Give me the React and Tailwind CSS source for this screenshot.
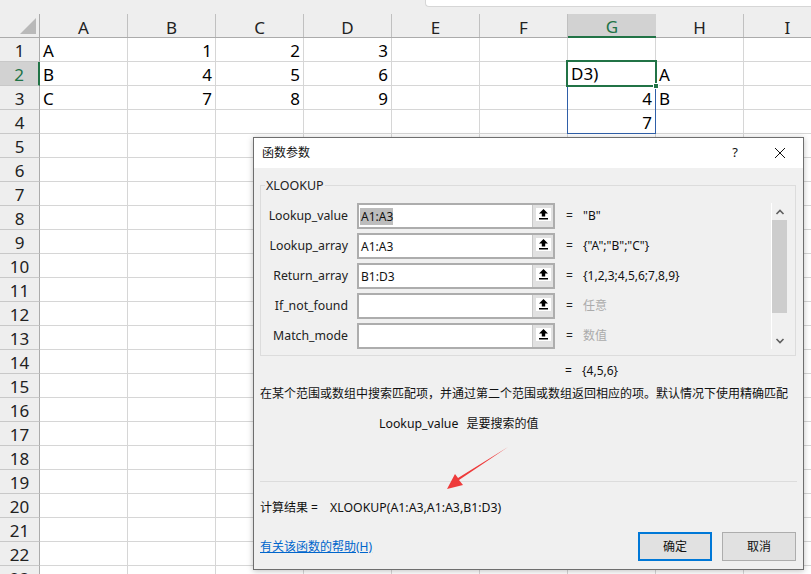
const COLS = ['A', 'B', 'C', 'D', 'E', 'F', 'G', 'H', 'I']
const ROWS = Array.from({ length: 23 }, (_, i) => i + 1)

const CELLS = {
  'A1': 'A', 'B1': 1, 'C1': 2, 'D1': 3,
  'A2': 'B', 'B2': 4, 'C2': 5, 'D2': 6,
  'A3': 'C', 'B3': 7, 'C3': 8, 'D3': 9,
  'G3': 4, 'G4': 7,
  'H2': 'A', 'H3': 'B',
}

const ARGS = [
  { label: 'Lookup_value', value: 'A1:A3', result: '"B"', selected: true },
  { label: 'Lookup_array', value: 'A1:A3', result: '{"A";"B";"C"}' },
  { label: 'Return_array', value: 'B1:D3', result: '{1,2,3;4,5,6;7,8,9}' },
  { label: 'If_not_found', value: '', result: '任意', muted: true },
  { label: 'Match_mode', value: '', result: '数值', muted: true },
]

function Sheet() {
  return (
    <div className="flex flex-col">
      <div className="flex h-[38px] items-end border-b border-[#ababab] bg-[#eeeeee]">
        <div className="relative h-[23px] w-[40px] shrink-0 border-r border-[#ababab]">
          <div className="absolute bottom-[3px] right-[3px] h-0 w-0 border-b-[16px] border-l-[16px] border-b-[#b9b9b9] border-l-transparent" />
        </div>
        {COLS.map(c => (
          <div
            key={c}
            className={
              c === 'G'
                ? '-mb-px flex h-[24px] w-[88px] shrink-0 items-center justify-center border-b-2 border-[#217346] bg-[#d2d2d2] pt-[4px] text-[17px] text-[#217346]'
                : 'flex h-[23px] w-[88px] shrink-0 items-center justify-center border-r border-[#c0c0c0] pt-[4px] text-[17px] text-[#222222]'
            }
          >
            {c}
          </div>
        ))}
      </div>
      {ROWS.map(r => (
        <div key={r} className="flex h-[24px]">
          <div
            className={
              r === 2
                ? 'flex w-[40px] shrink-0 items-center justify-center border-r-2 border-b border-r-[#217346] border-b-[#c8c8c8] bg-[#d2d2d2] pt-[2px] text-[17px] text-[#217346]'
                : 'flex w-[40px] shrink-0 items-center justify-center border-r border-b border-r-[#ababab] border-b-[#c8c8c8] bg-[#eeeeee] pt-[2px] text-[17px] text-[#222222]'
            }
          >
            {r}
          </div>
          {COLS.map(c => {
            const v = CELLS[c + r]
            return (
              <div
                key={c}
                className={
                  typeof v === 'number'
                    ? 'flex w-[88px] shrink-0 items-center justify-end border-r border-b border-[#d6d6d6] bg-white px-[3px] pt-[2px] text-[17px] text-black'
                    : 'flex w-[88px] shrink-0 items-center border-r border-b border-[#d6d6d6] bg-white px-[3px] pt-[2px] text-[17px] text-black'
                }
              >
                {v}
              </div>
            )
          })}
        </div>
      ))}
    </div>
  )
}

function UpArrow() {
  return (
    <svg width="15" height="13" viewBox="0 0 15 13" className="bg-white">
      <path d="M7.5 1 L12 5.5 L9.2 5.5 L9.2 8.5 L5.8 8.5 L5.8 5.5 L3 5.5 Z" fill="#000" />
      <rect x="3" y="10" width="9" height="1.5" fill="#000" />
    </svg>
  )
}

function ArgRow({ arg }) {
  return (
    <div className="flex h-[26px] items-center">
      <div className="w-[87px] shrink-0 text-right text-[12.3px] text-[#222222]">{arg.label}</div>
      <div className="ml-[9px] flex h-[26px] w-[198px] shrink-0 border-2 border-[#adadad]">
        <div className="flex flex-1 items-center bg-white px-[1px] text-[12px] text-[#111111]">
          {arg.value && (
            <span className={arg.selected ? 'bg-[#bdbdbd] pl-[1px] leading-[17px]' : 'pl-[1px] leading-[17px]'}>{arg.value}</span>
          )}
        </div>
        <div className="flex w-[21px] shrink-0 items-center justify-center border-l border-[#c8c8c8] bg-[#e1e1e1] pb-[3px]">
          <UpArrow />
        </div>
      </div>
      <div className="ml-[11px] w-[17px] shrink-0 text-[12px] text-[#222222]">=</div>
      <div className={arg.muted ? 'text-[12px] text-[#ababab]' : 'text-[12px] text-[#111111]'}>{arg.result}</div>
    </div>
  )
}

function Dialog() {
  return (
    <div className="absolute left-[253px] top-[137px] flex h-[433px] w-[551px] flex-col border border-[#6e6e6e] bg-[#f0f0f0] shadow-[0_1px_6px_rgba(0,0,0,0.25)]">
      <div className="flex h-[30px] shrink-0 items-center bg-white pl-[8px] text-[12px] text-[#111111]">
        <span>函数参数</span>
        <span className="ml-auto mr-[36px] text-[13px]">?</span>
        <svg width="12" height="12" viewBox="0 0 12 12" className="mr-[17px]">
          <path d="M1 1 L11 11 M11 1 L1 11" stroke="#111" strokeWidth="1" />
        </svg>
      </div>
      <div className="relative ml-[6px] mr-[7px] mt-[17px] h-[171px] shrink-0 border border-[#dcdcdc]">
        <div className="absolute -top-[8px] left-[4px] bg-[#f0f0f0] px-[1px] text-[12.5px] leading-[16px] text-[#222222]">XLOOKUP</div>
        <div className="flex flex-col gap-[4px] pt-[17px]">
          {ARGS.map(a => <ArgRow key={a.label} arg={a} />)}
        </div>
        <div className="absolute bottom-[6px] right-[8px] top-[17px] flex w-[16px] flex-col items-center border-l border-white">
          <svg width="10" height="8" viewBox="0 0 10 8" className="mt-[5px]">
            <path d="M1.5 6 L5 2.5 L8.5 6" fill="none" stroke="#606060" strokeWidth="1.6" />
          </svg>
          <div className="mt-[4px] h-[93px] w-full bg-[#cdcdcd]" />
          <svg width="10" height="8" viewBox="0 0 10 8" className="mb-[4px] mt-auto">
            <path d="M1.5 2 L5 5.5 L8.5 2" fill="none" stroke="#606060" strokeWidth="1.6" />
          </svg>
        </div>
      </div>
      <div className="flex h-[29px] shrink-0 items-center pl-[311px] text-[12px] text-[#111111]">
        <span className="w-[17px]">=</span>
        <span>{'{4,5,6}'}</span>
      </div>
      <div className="whitespace-nowrap px-[6px] text-[12px] leading-[18px] text-[#111111]">
        在某个范围或数组中搜索匹配项，并通过第二个范围或数组返回相应的项。默认情况下使用精确匹配
      </div>
      <div className="mt-[12px] flex pl-[125px] text-[12px] leading-[18px] text-[#111111]">
        <span className="text-[12.3px]">Lookup_value</span>
        <span className="ml-[8px]">是要搜索的值</span>
      </div>
      <div className="mx-[6px] mt-[48px] border-t border-[#dcdcdc]" />
      <div className="mt-[17px] flex px-[6px] text-[12px] leading-[18px] text-[#111111]">
        <span className="whitespace-pre">计算结果 = </span>
        <span className="ml-[9px] text-[12.3px]">XLOOKUP(A1:A3,A1:A3,B1:D3)</span>
      </div>
      <div className="mt-[15px] flex items-center pl-[6px] pr-[7px]">
        <a className="text-[12px] text-[#0066cc] underline">有关该函数的帮助(H)</a>
        <button className="ml-auto h-[29px] w-[74px] border-2 border-[#0078d7] bg-[#e1e1e1] text-[12px] text-[#111111]">确定</button>
        <button className="ml-[10px] h-[29px] w-[74px] border border-[#adadad] bg-[#e1e1e1] text-[12px] text-[#111111]">取消</button>
      </div>
    </div>
  )
}

export default function App() {
  return (
    <div className="relative h-[574px] w-[811px] overflow-hidden bg-[#eeeeee] font-['Noto_Sans','Noto_Sans_CJK_SC',sans-serif]">
      <div className="absolute right-0 top-0 h-[7px] w-[386px] rounded-bl-[4px] border-b border-l border-[#d6d6d6] bg-white" />
      <Sheet />
      {/* 选区：G2 活动单元格 + 溢出范围 */}
      <div className="absolute left-[567px] top-[86px] h-[48px] w-[89px] border border-[#2f5fa8]" />
      <div className="absolute left-[566px] top-[60px] flex h-[27px] w-[91px] items-center border-2 border-[#217346] bg-white px-[3px] pt-[1px] text-[17px] text-black">D3)</div>
      <div className="absolute left-[653px] top-[83px] h-[6px] w-[6px] border border-white bg-[#217346]" />
      <Dialog />
      <svg className="absolute left-[440px] top-[440px]" width="80" height="60" viewBox="0 0 80 60">
        <path d="M68 7 L19 40 L23 45 L7 49 L15 34 L18 38 Z" fill="#ee3b3b" />
      </svg>
    </div>
  )
}
